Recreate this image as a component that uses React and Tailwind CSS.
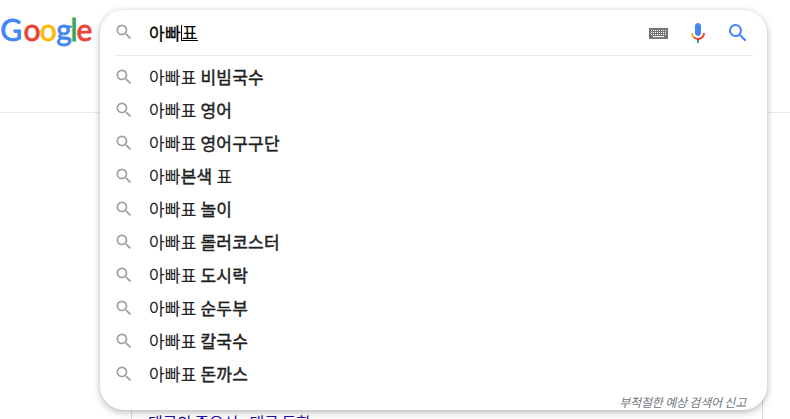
import { Fragment } from 'react'

const SUGGESTIONS = [
  [{ text: '아빠표 ' }, { text: '비빔국수', bold: true }],
  [{ text: '아빠표 ' }, { text: '영어', bold: true }],
  [{ text: '아빠표 ' }, { text: '영어구구단', bold: true }],
  [{ text: '아빠' }, { text: '본색', bold: true }, { text: ' 표' }],
  [{ text: '아빠표 ' }, { text: '놀이', bold: true }],
  [{ text: '아빠표 ' }, { text: '롤러코스터', bold: true }],
  [{ text: '아빠표 ' }, { text: '도시락', bold: true }],
  [{ text: '아빠표 ' }, { text: '순두부', bold: true }],
  [{ text: '아빠표 ' }, { text: '칼국수', bold: true }],
  [{ text: '아빠표 ' }, { text: '돈까스', bold: true }],
]

function SearchIcon({ className }) {
  return (
    <svg viewBox="0 0 24 24" fill="currentColor" className={className}>
      <path d="M15.5 14h-.79l-.28-.27A6.47 6.47 0 0 0 16 9.5 6.5 6.5 0 1 0 9.5 16c1.61 0 3.09-.59 4.23-1.57l.27.28v.79l5 4.99L20.49 19l-4.99-5zm-6 0C7.01 14 5 11.99 5 9.5S7.01 5 9.5 5 14 7.01 14 9.5 11.99 14 9.5 14z" />
    </svg>
  )
}

function KeyboardIcon() {
  return (
    <svg viewBox="0 0 19 11" className="mt-px h-[11px] w-[19px]">
      <path d="M0 0h19v11H0z" fill="#757575" />
      <path
        d="M2 2.5h15M2 4.5h15M2 6.5h15"
        stroke="#fff"
        strokeDasharray="1 1"
      />
      <path d="M4 8.6h11" stroke="#fff" />
    </svg>
  )
}

function MicIcon() {
  return (
    <svg viewBox="0 0 24 24" className="size-6">
      <path fill="#4285f4" d="M12 15c1.66 0 3-1.31 3-2.97V5c0-1.66-1.34-3-3-3S9 3.34 9 5v7.03C9 13.69 10.34 15 12 15z" />
      <path fill="#34a853" d="M11 18.08h2V22h-2z" />
      <path fill="#fbbc05" d="M7.05 16.87C5.78 15.6 5 13.93 5 12h2c0 1.45.56 2.42 1.47 3.38v.32l-1.15 1.18z" />
      <path fill="#ea4335" d="M12 16.93a4.97 4.97 0 0 1-3.54-1.55l-1.41 1.49A6.94 6.94 0 0 0 12 19c3.87 0 6.99-2.92 6.99-7h-1.99c0 2.92-2.24 4.93-5 4.93z" />
    </svg>
  )
}

function Logo() {
  return (
    <svg
      viewBox="0 0 96 56"
      className="h-14 w-24 overflow-visible font-['Lato'] text-[30px]"
      strokeWidth="0.8"
    >
      <text y="40.5">
        <tspan x="0.3" fill="#4285f4" stroke="#4285f4">G</tspan>
        <tspan x="23.4" fill="#ea4335" stroke="#ea4335">o</tspan>
        <tspan x="39.7" fill="#fbbc05" stroke="#fbbc05">o</tspan>
        <tspan x="56.2" fill="#4285f4" stroke="#4285f4">g</tspan>
        <tspan x="70.5" fill="#34a853" stroke="#34a853">l</tspan>
        <tspan x="76.4" fill="#ea4335" stroke="#ea4335">e</tspan>
      </text>
    </svg>
  )
}

function Suggestion({ parts }) {
  return (
    <li className="flex h-[33px] items-center pl-3.5">
      <SearchIcon className="mb-px size-5 text-[#9aa0a6]" />
      <span className="ml-[15px] pb-px text-[17px] leading-6 tracking-[0.2px] whitespace-pre text-[#212121]">
        {parts.map((part) => (
          <Fragment key={part.text}>
            {part.bold ? (
              <b className="font-normal [-webkit-text-stroke:0.45px_#212121]">{part.text}</b>
            ) : (
              part.text
            )}
          </Fragment>
        ))}
      </span>
    </li>
  )
}

export default function App() {
  return (
    <div className="relative h-[419px] w-[790px] overflow-hidden bg-white font-['Noto_Sans_CJK_KR',sans-serif]">
      {/* Results page behind the search box */}
      <header className="h-[113px] border-b border-[#ebebeb]">
        <Logo />
      </header>
      <div className="ml-[131px] h-[320px] w-[632px] border-x border-[#dadce0] pt-[297px] pl-4">
        <p className="text-[16px] leading-6 tracking-[-0.3px] whitespace-nowrap text-[#1a0dab]">
          태국의 중요성 - 태국 독학
        </p>
      </div>

      {/* Search box with suggestions */}
      <div
        className="absolute top-[10px] left-[100px] flex h-[400px] w-[667px] flex-col
                   rounded-[24px] bg-white shadow-[0_2px_7px_0_rgba(32,33,36,0.34)]"
      >
        <div className="flex h-[45px] items-center pl-3.5">
          <SearchIcon className="mb-px size-5 text-[#9aa0a6]" />
          <div className="ml-[15px] flex items-center text-[17px] leading-6 tracking-[0.3px] text-black">
            <span className="[-webkit-text-stroke:0.3px_#000]">아빠</span>
            <span className="h-4 w-px bg-black" />
            <span className="h-[17px] border-b border-black leading-4">표</span>
          </div>
          <div className="ml-auto flex items-center pr-[17px]">
            <KeyboardIcon />
            <span className="ml-[18px]">
              <MicIcon />
            </span>
            <SearchIcon className="ml-4 size-6 text-[#4285f4]" />
          </div>
        </div>
        <div className="mx-3.5 mb-[5px] border-t border-[#e8eaed]" />
        <ul>
          {SUGGESTIONS.map((parts, i) => (
            <Suggestion key={i} parts={parts} />
          ))}
        </ul>
        <p className="mt-[3px] mr-[21px] text-right text-[12px] leading-4 tracking-[-0.2px] text-[#70757a] italic">
          부적절한 예상 검색어 신고
        </p>
      </div>
    </div>
  )
}
